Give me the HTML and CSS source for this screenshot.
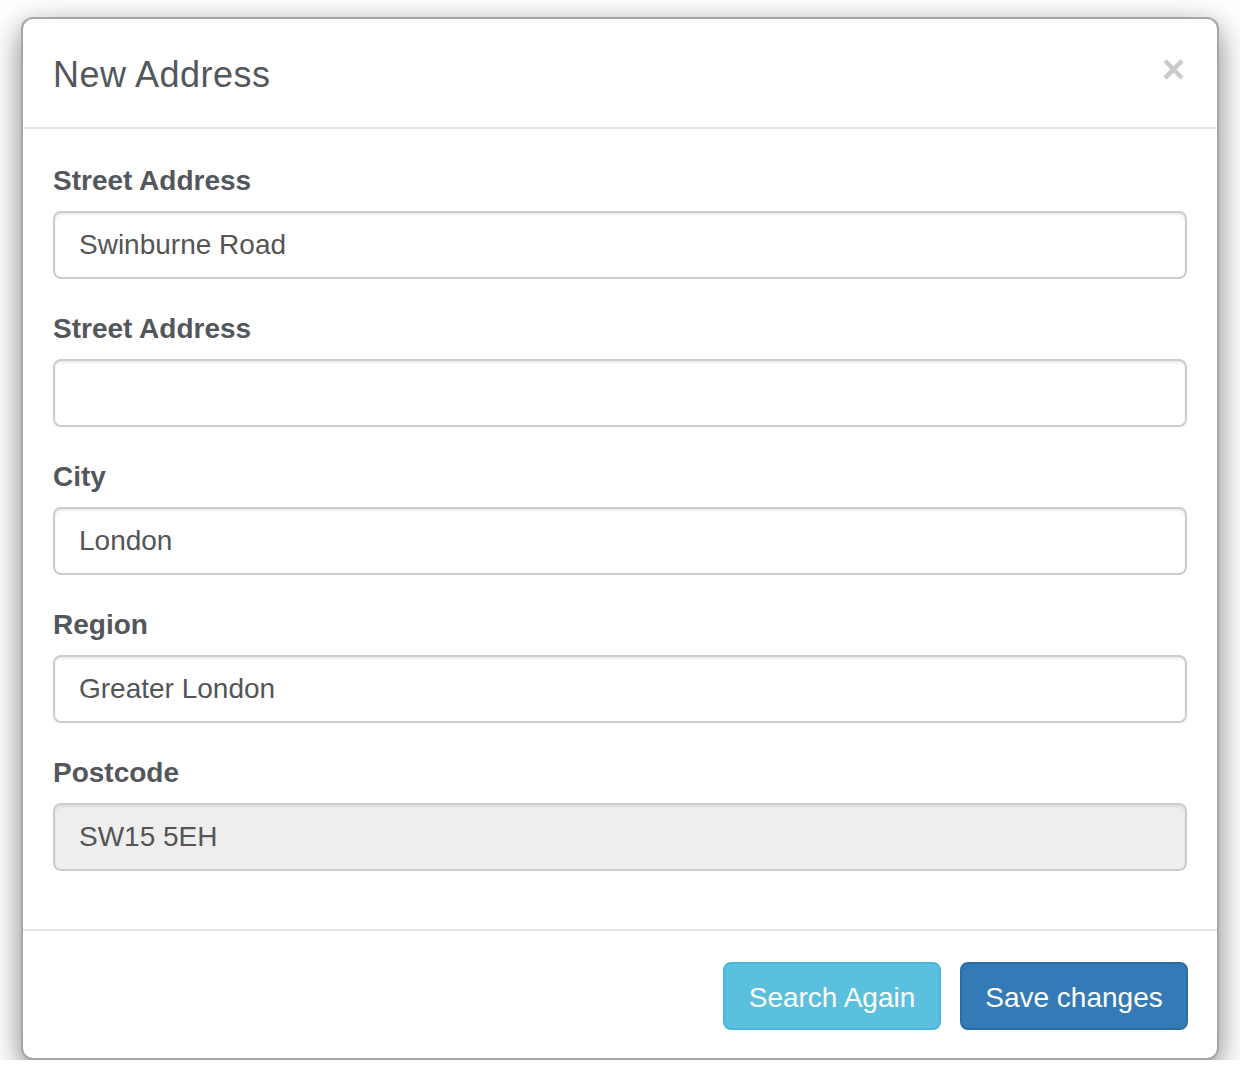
FILE: index.html
```html
<!DOCTYPE html>
<html>
<head>
<meta charset="utf-8">
<link rel="stylesheet" href="styles.css">
</head>
<body>
<div class="modal">
  <div class="modal-header">
    <button class="close" type="button">&times;</button>
    <h4 class="modal-title">New Address</h4>
  </div>
  <div class="modal-body">
    <div class="form-group">
      <label class="label">Street Address</label>
      <input class="form-control" type="text" value="Swinburne Road">
    </div>
    <div class="form-group">
      <label class="label">Street Address</label>
      <input class="form-control" type="text" value="">
    </div>
    <div class="form-group">
      <label class="label">City</label>
      <input class="form-control" type="text" value="London">
    </div>
    <div class="form-group">
      <label class="label">Region</label>
      <input class="form-control" type="text" value="Greater London">
    </div>
    <div class="form-group">
      <label class="label">Postcode</label>
      <input class="form-control" type="text" value="SW15 5EH" disabled>
    </div>
  </div>
  <div class="modal-footer">
    <button class="btn btn-info" type="button">Search Again</button>
    <button class="btn btn-primary" type="button">Save changes</button>
  </div>
</div>
</body>
</html>
```
FILE: styles.css
```css
* { box-sizing: border-box; }
html, body {
  margin: 0;
  padding: 0;
  background: #fff;
  font-family: "Liberation Sans", Arial, sans-serif;
  color: #53575c;
}
body { padding: 17px 21px 0 21px; }
.modal {
  width: 1198px;
  background: #fff;
  border: 2px solid rgba(0,0,0,0.35);
  border-radius: 12px;
  box-shadow: 0 10px 30px rgba(0,0,0,0.5);
}
.modal-header {
  padding: 30px 30px 26px 30px;
  border-bottom: 2px solid #e5e5e5;
}
.close {
  float: right;
  margin-top: 0;
  margin-right: 2px;
  padding: 0;
  border: 0;
  background: transparent;
  font-family: "Liberation Sans", Arial, sans-serif;
  font-size: 40px;
  font-weight: bold;
  line-height: 1;
  color: #000;
  opacity: 0.2;
}
.modal-title {
  margin: 0;
  font-size: 36px;
  font-weight: normal;
  letter-spacing: 0.5px;
  line-height: 52px;
  color: #53575c;
}
.modal-body { padding: 32px 30px 28px 30px; }
.form-group { margin-bottom: 30px; }
.label {
  display: block;
  margin-bottom: 10px;
  font-size: 28px;
  font-weight: bold;
  line-height: 40px;
  color: #53575c;
}
.form-control {
  display: block;
  width: 100%;
  height: 68px;
  padding: 0 24px;
  font-family: "Liberation Sans", Arial, sans-serif;
  font-size: 28px;
  color: #555;
  background: #fff;
  border: 2px solid #ccc;
  border-radius: 8px;
  box-shadow: inset 0 2px 2px rgba(0,0,0,0.075);
  outline: none;
}
.form-control:disabled {
  background: #eee;
  color: #555;
  -webkit-text-fill-color: #555;
  opacity: 1;
}
.modal-footer {
  display: flex;
  justify-content: flex-end;
  gap: 19px;
  padding: 31px 29px 28px 30px;
  border-top: 2px solid #e5e5e5;
}
.btn {
  height: 68px;
  padding: 3px 0 0 0;
  white-space: nowrap;
  font-family: "Liberation Sans", Arial, sans-serif;
  font-size: 28px;
  color: #fff;
  border-radius: 8px;
  border: 2px solid transparent;
}
.btn-info {
  width: 218px;
  background: #5bc0de;
  border-color: #46b8da;
}
.btn-primary {
  width: 228px;
  background: #337ab7;
  border-color: #2e6da4;
}
```
